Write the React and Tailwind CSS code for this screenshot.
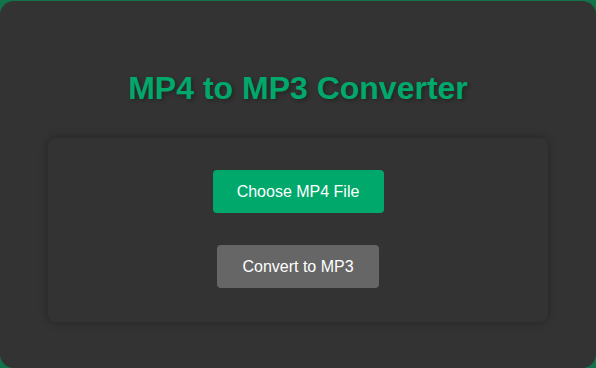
export default function App() {
  return (
    <div className="h-[368px] w-[596px] bg-[#11734a] pt-px font-['Liberation_Sans',Arial,sans-serif]">
      <div className="flex h-[367px] flex-col items-center rounded-[14px] bg-[#333333] px-12">
        <h1 className="mt-[67px] text-[32px] font-bold leading-[40px] text-[#00a86b] [text-shadow:2px_2px_4px_rgba(0,0,0,0.3)]">
          MP4 to MP3 Converter
        </h1>
        <div className="mt-[30px] flex h-[184px] w-full flex-col items-center rounded-lg bg-[#333333] pt-[32px] shadow-[0_0_10px_rgba(0,0,0,0.3)]">
          <button className="h-[43px] w-[171px] rounded bg-[#00a86b] text-[16px] text-white">
            Choose MP4 File
          </button>
          <button className="mt-[32px] h-[43px] w-[162px] rounded bg-[#666666] text-[16px] text-white">
            Convert to MP3
          </button>
        </div>
      </div>
    </div>
  );
}
